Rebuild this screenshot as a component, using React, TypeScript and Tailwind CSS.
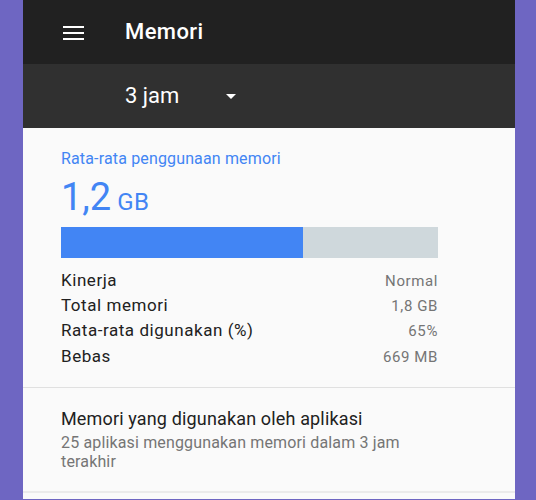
import React from "react";

const rows = [
  ["Kinerja", "Normal"],
  ["Total memori", "1,8 GB"],
  ["Rata-rata digunakan (%)", "65%"],
  ["Bebas", "669 MB"],
];

export default function App() {
  return (
    <div className="w-[536px] h-[500px] bg-[#6e66c2] pl-[23px] pr-[21px] overflow-hidden" style={{ fontFamily: "Roboto, 'Noto Sans', sans-serif" }}>
      <div className="h-[499px] bg-[#fafafa] flex flex-col">
        <div className="h-[64px] bg-[#212121] flex items-center shrink-0">
          <div className="w-[102px] flex items-center pl-[40px]">
            <svg width="21" height="14" viewBox="0 0 21 14" className="mt-[1px]">
              <rect x="0" y="0" width="21" height="2" fill="#ffffff" />
              <rect x="0" y="6" width="21" height="2" fill="#ffffff" />
              <rect x="0" y="12" width="21" height="2" fill="#ffffff" />
            </svg>
          </div>
          <span className="text-white text-[22px] tracking-[0.4px] font-medium leading-none">Memori</span>
        </div>
        <div className="h-[64px] bg-[#303030] flex items-center shrink-0 pl-[102px]">
          <span className="text-white text-[22px] leading-none w-[101px]">3 jam</span>
          <svg width="10" height="5" viewBox="0 0 10 5">
            <path d="M0 0 L10 0 L5 5 Z" fill="#ffffff" />
          </svg>
        </div>
        <div className="pl-[38px] pt-[21px] w-[415px] pb-[18px]">
          <div className="text-[16px] tracking-[0.15px] leading-[20px] text-[#4285f4]">Rata-rata penggunaan memori</div>
          <div className="mt-[6px] h-[44px] flex items-baseline text-[#4285f4] leading-[44px]">
            <span className="text-[38px] leading-[44px]">1,2</span>
            <span className="text-[24px] tracking-[0.5px] leading-[44px] ml-[6px]">GB</span>
          </div>
          <div className="mt-[8px] h-[31px] w-[377px] bg-[#cfd8dc] flex">
            <div className="h-full bg-[#4285f4]" style={{ width: "64.2%" }} />
          </div>
          <div className="mt-[10px] w-[377px]">
            {rows.map(([l, v]) => (
              <div key={l} className="flex items-baseline justify-between h-[25.2px]">
                <span className="text-[17px] tracking-[0.55px] leading-[25px] text-[#212121]">{l}</span>
                <span className="text-[15px] tracking-[0.6px] leading-[25px] text-[#757575]">{v}</span>
              </div>
            ))}
          </div>
        </div>
        <div className="h-px bg-[#e0e0e0]" />
        <div className="pl-[38px] pt-[20px] w-[415px] flex-1">
          <div className="text-[18px] tracking-[0.15px] leading-[22px] text-[#212121]">Memori yang digunakan oleh aplikasi</div>
          <div className="text-[16px] tracking-[0.15px] leading-[19px] text-[#757575] w-[377px] mt-[3px]">
            25 aplikasi menggunakan memori dalam 3 jam terakhir
          </div>
        </div>
        <div className="h-[2px] bg-[#ebebeb] mb-[6px]" />
      </div>
    </div>
  );
}
